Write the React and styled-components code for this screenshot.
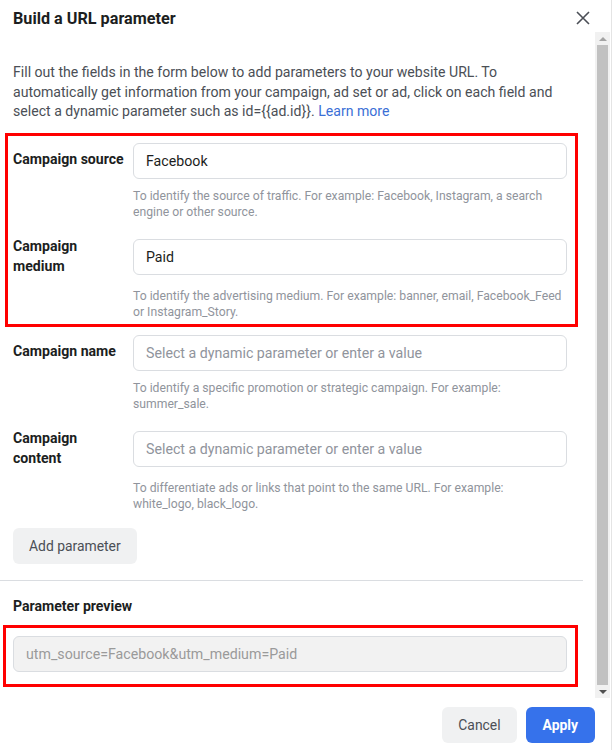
import React from 'react';
import styled, { createGlobalStyle } from 'styled-components';

const GlobalStyle = createGlobalStyle`
  html, body {
    margin: 0;
    padding: 0;
    background: #ffffff;
  }
  body {
    font-family: Roboto, "Liberation Sans", Arial, sans-serif;
    -webkit-font-smoothing: antialiased;
  }
  * {
    box-sizing: border-box;
  }
`;

const fields = [
  {
    label: 'Campaign source',
    value: 'Facebook',
    help: 'To identify the source of traffic. For example: Facebook, Instagram, a search engine or other source.',
    marked: true,
  },
  {
    label: 'Campaign medium',
    value: 'Paid',
    help: 'To identify the advertising medium. For example: banner, email, Facebook_Feed or Instagram_Story.',
    marked: true,
  },
  {
    label: 'Campaign name',
    value: '',
    help: 'To identify a specific promotion or strategic campaign. For example: summer_sale.',
  },
  {
    label: 'Campaign content',
    value: '',
    help: 'To differentiate ads or links that point to the same URL. For example: white_logo, black_logo.',
  },
];

const introText =
  'Fill out the fields in the form below to add parameters to your website URL. To automatically get information from your campaign, ad set or ad, click on each field and select a dynamic parameter such as id={{ad.id}}. ';

const Field = ({ label, value, help }) => (
  <FieldBlock>
    <FieldRow>
      <Label>{label}</Label>
      <Input
        readOnly
        value={value}
        placeholder="Select a dynamic parameter or enter a value"
      />
    </FieldRow>
    <Help>{help}</Help>
  </FieldBlock>
);

const App = () => {
  const marked = fields.filter((f) => f.marked);
  const rest = fields.filter((f) => !f.marked);

  return (
    <>
      <GlobalStyle />
      <Dialog>
        <Header>
          <Title>Build a URL parameter</Title>
          <CloseButton aria-label="Close">
            <svg width="14" height="14" viewBox="0 0 14 14">
              <path d="M1 1 L13 13 M13 1 L1 13" stroke="#4b4f56" strokeWidth="1.6" fill="none" />
            </svg>
          </CloseButton>
        </Header>

        <Body>
          <Column>
            <Form>
              <Intro>
                {introText}
                <Link>Learn more</Link>
              </Intro>

              <Highlight>
                {marked.map((f) => (
                  <Field key={f.label} {...f} />
                ))}
              </Highlight>

              {rest.map((f) => (
                <Field key={f.label} {...f} />
              ))}

              <SecondaryButton>Add parameter</SecondaryButton>
            </Form>

            <Divider />

            <Preview>
              <PreviewLabel>Parameter preview</PreviewLabel>
              <PreviewHighlight>
                <PreviewBox>utm_source=Facebook&amp;utm_medium=Paid</PreviewBox>
              </PreviewHighlight>
            </Preview>
          </Column>

          <Scrollbar>
            <Arrow $up />
            <Thumb />
            <Arrow />
          </Scrollbar>
        </Body>

        <Footer>
          <SecondaryButton>Cancel</SecondaryButton>
          <PrimaryButton>Apply</PrimaryButton>
        </Footer>
      </Dialog>
    </>
  );
};

const Dialog = styled.div`
  width: 612px;
  height: 750px;
  display: flex;
  flex-direction: column;
  background: #fff;
  border-right: 1px solid #e4e4e4;
  overflow: hidden;
`;

const Header = styled.div`
  height: 32px;
  display: flex;
  align-items: center;
  justify-content: space-between;
  padding: 4px 21px 0 13px;
  flex-shrink: 0;
`;

const Title = styled.div`
  font-size: 16.2px;
  font-weight: 700;
  color: #1c1e21;
`;

const CloseButton = styled.button`
  border: none;
  background: none;
  padding: 0;
  display: flex;
`;

const Body = styled.div`
  height: 666px;
  display: flex;
  flex-shrink: 0;
  overflow: hidden;
`;

const Column = styled.div`
  width: 583px;
  flex-shrink: 0;
  display: flex;
  flex-direction: column;
`;

const Form = styled.div`
  display: flex;
  flex-direction: column;
  gap: 16px;
  padding: 31px 16px 0 13px;
`;

const Intro = styled.p`
  margin: 0 0 5px;
  font-size: 14.1px;
  line-height: 19.5px;
  color: #4b4f56;
`;

const Link = styled.a`
  color: #3b6fd6;
  cursor: pointer;
`;

const Highlight = styled.div`
  display: flex;
  flex-direction: column;
  gap: 16px;
  border: 3px solid #ff0000;
  padding: 7px 8px 4px 5px;
  margin: -10px -11px -8px -8px;
`;

const FieldBlock = styled.div`
  display: flex;
  flex-direction: column;
  gap: 9px;
`;

const FieldRow = styled.div`
  display: flex;
  align-items: center;
`;

const Label = styled.label`
  width: 120px;
  flex-shrink: 0;
  font-size: 14.1px;
  font-weight: 700;
  line-height: 20px;
  color: #1c1e21;
  padding-right: 7px;
  padding-bottom: 3px;
`;

const PreviewLabel = styled.div`
  font-size: 14.1px;
  font-weight: 700;
  line-height: 20px;
  color: #1c1e21;
  padding-bottom: 3px;
`;

const Input = styled.input`
  flex: 1;
  height: 36px;
  border: 1px solid #dadde1;
  border-radius: 6px;
  padding: 0 12px;
  font-family: inherit;
  font-size: 14.2px;
  color: #1c1e21;
  background: #fff;
  outline: none;

  &::placeholder {
    color: #90949c;
  }
`;

const Help = styled.div`
  margin-left: 120px;
  font-size: 12.2px;
  line-height: 16px;
  color: #90949c;
`;

const SecondaryButton = styled.button`
  align-self: flex-start;
  height: 36px;
  padding: 0 16px;
  border: none;
  border-radius: 6px;
  background: #f0f1f2;
  font-family: inherit;
  font-size: 13.9px;
  color: #4b4f56;
`;

const PrimaryButton = styled(SecondaryButton)`
  background: #3672eb;
  color: #fff;
  font-weight: 700;
  padding: 0 17px;
`;

const Divider = styled.hr`
  margin: 16px 0 0;
  border: none;
  border-top: 1px solid #dadde1;
`;

const Preview = styled.div`
  display: flex;
  flex-direction: column;
  padding: 15px 16px 0 13px;
`;

const PreviewHighlight = styled.div`
  border: 3px solid #ff0000;
  margin: 6px -11px 0 -10px;
  padding: 8px 8px 12px 7px;
`;

const PreviewBox = styled.div`
  height: 36px;
  display: flex;
  align-items: center;
  padding: 0 12px;
  border: 1px solid #dadde1;
  border-radius: 6px;
  background: #f2f2f2;
  font-size: 14.2px;
  color: #9a9a9a;
`;

const Scrollbar = styled.div`
  margin-left: 12px;
  width: 15px;
  display: flex;
  flex-direction: column;
  background: #f1f1f1;
`;

const Arrow = styled.div`
  height: 13px;
  flex-shrink: 0;
  display: flex;
  align-items: center;
  justify-content: center;

  &::after {
    content: '';
    border-left: 4px solid transparent;
    border-right: 4px solid transparent;
    ${(p) =>
      p.$up
        ? 'border-bottom: 4px solid #a3a3a3;'
        : 'border-top: 4px solid #505050;'}
  }
`;

const Thumb = styled.div`
  flex: 1;
  margin: 0 2px;
  background: #c1c1c1;
`;

const Footer = styled.div`
  flex: 1;
  display: flex;
  justify-content: flex-end;
  align-items: flex-start;
  gap: 9px;
  padding: 9px 16px 0 0;
`;

export default App;
